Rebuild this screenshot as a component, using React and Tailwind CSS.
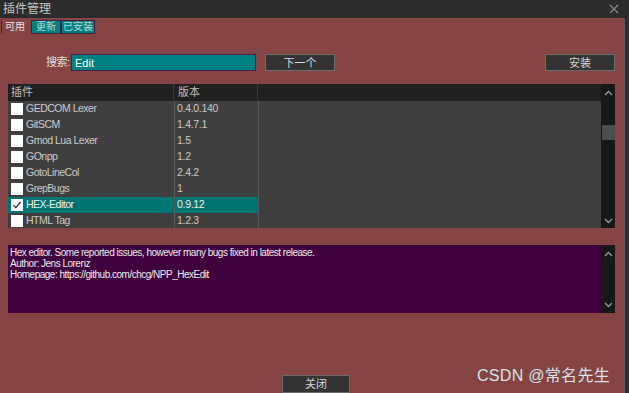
import { useState } from "react";

// plugin rows shown in the list
const plugins = [
  { name: "GEDCOM Lexer", version: "0.4.0.140" },
  { name: "GitSCM", version: "1.4.7.1" },
  { name: "Gmod Lua Lexer", version: "1.5" },
  { name: "GOnpp", version: "1.2" },
  { name: "GotoLineCol", version: "2.4.2" },
  { name: "GrepBugs", version: "1" },
  { name: "HEX-Editor", version: "0.9.12", checked: true },
  { name: "HTML Tag", version: "1.2.3" },
];

const font = { fontFamily: '"Liberation Sans", "Noto Sans CJK SC", sans-serif' };

const tabs = [
  { label: "可用", w: "w-[29px]" },
  { label: "更新", w: "w-[30px]" },
  { label: "已安装", w: "w-[34px]" },
];

function Chevron({ down }) {
  return (
    <svg width="9" height="6" viewBox="0 0 9 6" className="text-[#9a9a9a]">
      <path
        d={down ? "M1 1l3.5 3.5L8 1" : "M1 5l3.5-3.5L8 5"}
        fill="none"
        stroke="currentColor"
        strokeWidth="1.3"
      />
    </svg>
  );
}

function Checkbox({ checked }) {
  return (
    <span className="w-[12px] h-[12px] bg-white flex items-center justify-center shrink-0">
      {checked && (
        <svg width="10" height="10" viewBox="0 0 10 10">
          <path d="M1.5 5.2l2.3 2.4L8.6 2" fill="none" stroke="#222" strokeWidth="1.2" />
        </svg>
      )}
    </span>
  );
}

export default function App() {
  const [active, setActive] = useState("可用");

  return (
    <div className="w-[629px] h-[393px] overflow-hidden flex flex-col bg-[#2b2b2b] text-[#cfcfcf]" style={font}>
      {/* title bar */}
      <div className="h-[18px] shrink-0 flex items-center justify-between pl-[3px] pr-[10px]">
        <span className="text-[12px] text-[#c4c4c4]">插件管理</span>
        <svg width="10" height="10" viewBox="0 0 10 10">
          <path d="M1 1l8 8M9 1l-8 8" stroke="#8c8c8c" strokeWidth="1.2" />
        </svg>
      </div>

      <div className="flex flex-1 min-h-0">
        <div className="relative w-[624px] bg-[#854343] flex flex-col">
          {/* tabs */}
          <div className="flex items-stretch h-[14px] mt-[2px] text-[10px] leading-none whitespace-nowrap">
            <div className="w-[1px] ml-[1px] bg-[#4a2424]" />
            {tabs.map((t) =>
              t.label === active ? (
                <button key={t.label} onClick={() => setActive(t.label)} className={`${t.w} pr-[3px] text-[#e6e6e6]`}>
                  {t.label}
                </button>
              ) : (
                <button
                  key={t.label}
                  onClick={() => setActive(t.label)}
                  className={`${t.w} bg-[#008080] border border-[#3d2040] text-[#b8d8d8]`}
                >
                  {t.label}
                </button>
              )
            )}
          </div>

          {/* search row */}
          <div className="flex items-center h-[17px] mt-[20px] text-[11px]">
            <span className="ml-[46px] w-[25px] whitespace-nowrap text-[#e0e0e0] tracking-[-0.5px]">搜索:</span>
            <input
              defaultValue="Edit"
              className="w-[185px] h-[17px] bg-[#008080] border border-[#4a1d50] px-[3px] text-[11px] text-white outline-none"
              style={font}
            />
            <button className="ml-[9px] w-[70px] h-[17px] bg-[#333333] border border-[#6a6a6a] text-[11px] text-[#d8d8d8]">
              下一个
            </button>
            <button className="ml-auto mr-[9px] w-[70px] h-[17px] bg-[#333333] border border-[#6a6a6a] text-[11px] text-[#d8d8d8]">
              安装
            </button>
          </div>

          {/* plugin list */}
          <div className="mt-[13px] ml-[8px] w-[607px] h-[144px] flex bg-[#3f3f3f] overflow-hidden">
            <div className="flex-1 flex flex-col">
              <div className="h-[17px] shrink-0 flex bg-[#202020] text-[11px] text-[#bdbdbd]">
                <div className="w-[166px] px-[3px] flex items-center border-r border-[#3a3a3a]">插件</div>
                <div className="w-[84px] px-[4px] flex items-center border-r border-[#3a3a3a]">版本</div>
              </div>
              <div className="flex-1">
                {plugins.map((p) => (
                  <div
                    key={p.name}
                    className={`w-[251px] h-[16px] flex text-[10.5px] border-r border-[#5a5a5a] ${p.checked ? "bg-[#007373] text-[#f0f0f0]" : "text-[#cacaca]"}`}
                  >
                    <div className="w-[166px] flex items-center gap-[2px] pl-[3px]">
                      <Checkbox checked={p.checked} />
                      <span className="ml-[1px] tracking-[-0.5px]">{p.name}</span>
                    </div>
                    <div className="w-[84px] flex items-center px-[2px] border-l border-[#5a5a5a] tracking-[-0.3px]">
                      {p.version}
                    </div>
                  </div>
                ))}
              </div>
            </div>
            {/* scrollbar */}
            <div className="w-[14px] bg-[#171717] flex flex-col items-center">
              <div className="h-[17px] flex items-center">
                <Chevron />
              </div>
              <div className="mt-[24px] w-[13px] h-[15px] bg-[#4d4d4d]" />
              <div className="mt-auto h-[14px] flex items-center">
                <Chevron down />
              </div>
            </div>
          </div>

          {/* description */}
          <div className="mt-[17px] ml-[8px] w-[607px] h-[68px] flex bg-[#400040] border-t border-[#2a0a2a]">
            <div className="flex-1 pl-[2px] pt-[1px] text-[10px] leading-[11px] text-[#ececec] tracking-[-0.5px]">
              <div>Hex editor. Some reported issues, however many bugs fixed in latest release.</div>
              <div>Author: Jens Lorenz</div>
              <div>Homepage: https://github.com/chcg/NPP_HexEdit</div>
            </div>
            <div className="w-[14px] bg-[#171717] flex flex-col items-center justify-between py-[5px]">
              <Chevron />
              <Chevron down />
            </div>
          </div>

          {/* close */}
          <button className="mt-[62px] ml-[282px] w-[68px] h-[18px] bg-[#333333] border border-[#6a6a6a] text-[11px] text-[#d8d8d8]">
            关闭
          </button>

          {/* watermark */}
          <div className="absolute left-[477px] top-[346px] text-[16px] tracking-[0.3px] text-[#e2e2e2] [text-shadow:0_0_1px_#555]">
            CSDN @常名先生
          </div>
        </div>
        <div className="flex-1 bg-[#2e2e2e] border-l border-[#555]" />
      </div>
    </div>
  );
}
